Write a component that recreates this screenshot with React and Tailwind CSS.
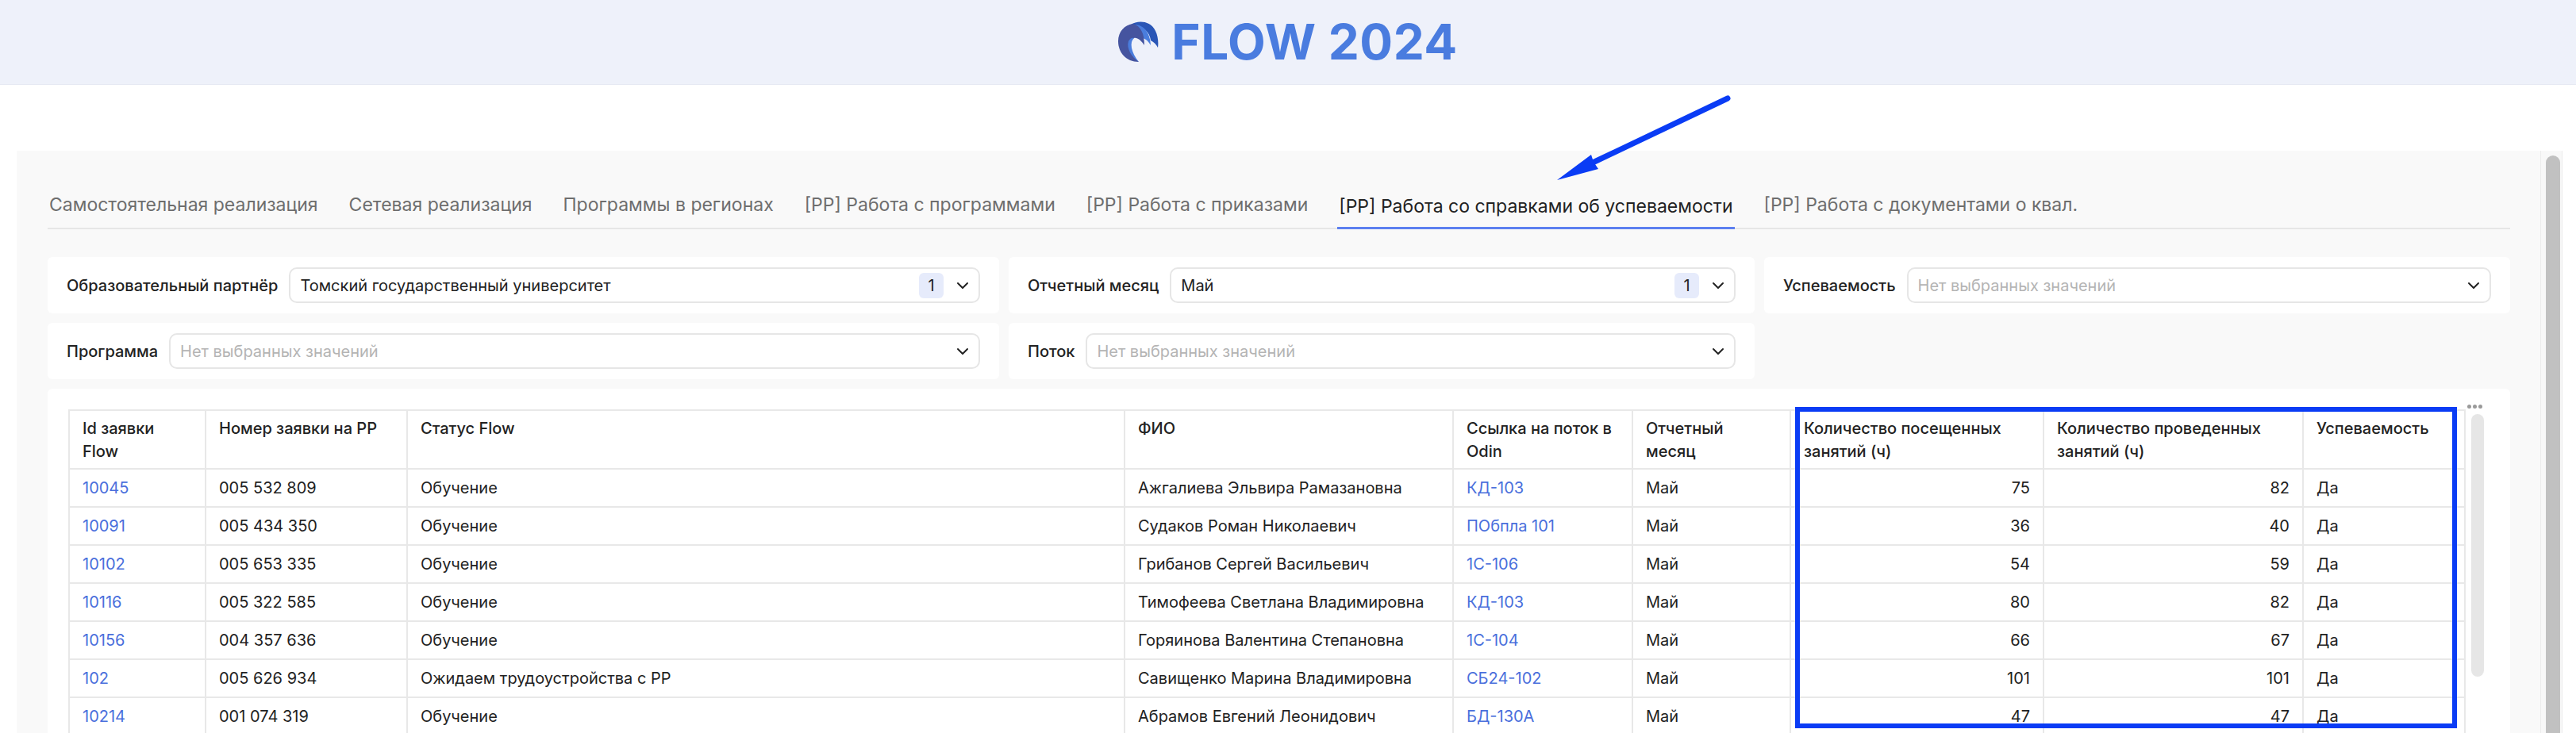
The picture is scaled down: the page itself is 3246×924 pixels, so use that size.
import React from "react";
import { ChevronDown } from "lucide-react";

const tabs = [
  "Самостоятельная реализация",
  "Сетевая реализация",
  "Программы в регионах",
  "[РР] Работа с программами",
  "[РР] Работа с приказами",
  "[РР] Работа со справками об успеваемости",
  "[РР] Работа с документами о квал.",
];

const columns = [
  { title: "Id заявки Flow", width: "w-[172px]" },
  { title: "Номер заявки на РР", width: "w-[254px]" },
  { title: "Статус Flow", width: "w-[904px]" },
  { title: "ФИО", width: "w-[414px]" },
  { title: "Ссылка на поток в Odin", width: "w-[226px]" },
  { title: "Отчетный месяц", width: "w-[199px]" },
  { title: "Количество посещенных занятий (ч)", width: "w-[319px]" },
  { title: "Количество проведенных занятий (ч)", width: "w-[327px]" },
  { title: "Успеваемость", width: "w-[204px]" },
];

const rows = [
  ["10045", "005 532 809", "Обучение", "Ажгалиева Эльвира Рамазановна", "КД-103", "75", "82"],
  ["10091", "005 434 350", "Обучение", "Судаков Роман Николаевич", "ПОбпла 101", "36", "40"],
  ["10102", "005 653 335", "Обучение", "Грибанов Сергей Васильевич", "1С-106", "54", "59"],
  ["10116", "005 322 585", "Обучение", "Тимофеева Светлана Владимировна", "КД-103", "80", "82"],
  ["10156", "004 357 636", "Обучение", "Горяинова Валентина Степановна", "1С-104", "66", "67"],
  ["102", "005 626 934", "Ожидаем трудоустройства с РР", "Савищенко Марина Владимировна", "СБ24-102", "101", "101"],
  ["10214", "001 074 319", "Обучение", "Абрамов Евгений Леонидович", "БД-130А", "47", "47"],
];

const Logo = () => (
  <svg viewBox="0 0 51 52" className="w-[51px] h-[52px] mr-[16px] mt-[-1px] shrink-0">
    <path d="M16 4C24 -1 40 -2 47 12C50 18 51 26 50 33C48 29 45 26 41 24C40 14 32 5 16 4Z" fill="#2a56b6" />
    <path d="M14 5C26 1 40 8 41 30C38 25 35 22 31 21C30 12 25 6 14 5Z" fill="#4a7ddd" />
    <path d="M26 51C10 51 0 39 0 25C0 13 8 4 19 3C29 6 33 16 33 30C29 24 24 20 20 21C13 23 14 40 26 51Z" fill="#45549f" />
    <path d="M26 51C17 45 10 34 13 25C15 21 18 20 20 21C14 26 16 39 26 51Z" fill="#4a7ddd" />
  </svg>
);

const FilterCard = ({ label, value, count }) => (
  <div className="flex items-center h-[71px] bg-white rounded-md pl-[24px] pr-[24px]">
    <span className="text-[20px] font-medium text-[#222] whitespace-nowrap mr-[14px]">{label}</span>
    <div className="flex flex-1 items-center h-[45px] border-2 border-[#e6e6e6] rounded-[10px] bg-white pl-[12px] pr-[8px]">
      <span className={value ? "text-[20px] text-[#222]" : "text-[20px] text-[#b4b4b4]"}>
        {value || "Нет выбранных значений"}
      </span>
      <span className="flex-1" />
      {count && (
        <span className="flex items-center justify-center w-[31px] h-[32px] rounded-md bg-[#e6ebfb] text-[20px] text-[#222]">
          {count}
        </span>
      )}
      <ChevronDown size={24} strokeWidth={2} className="text-[#222] ml-[12px]" />
    </div>
  </div>
);

export default function App() {
  return (
    <div className="relative h-[924px] overflow-hidden bg-white font-['Inter',sans-serif]">
      <header className="flex items-center justify-center h-[107px] bg-[#eef1fa] border-b border-[#e6e9f3]">
        <Logo />
        <h1 className="text-[62px] font-bold leading-none text-[#4a7cdf] tracking-[0.5px]">FLOW 2024</h1>
      </header>

      <div className="flex mt-[83px] ml-[21px] mr-[17px]">
        <main className="flex-1 bg-[#f9f9f9] pl-[39px] pr-[38px] h-[734px]">
          <nav className="flex gap-[35px] h-[99px] items-end border-b-2 border-[#e6e6e6]">
            {tabs.map((tab, i) => (
              <div
                key={tab}
                className={
                  i === 5
                    ? "text-[23px] h-[46px] px-[2px] mb-[-2px] text-[#222] border-b-[3px] border-[#5c7ff0] whitespace-nowrap"
                    : "text-[23px] h-[46px] px-[2px] text-[#6e6e6e] whitespace-nowrap"
                }
              >
                {tab}
              </div>
            ))}
          </nav>

          <div className="grid grid-cols-[1199px_940px_940px] gap-[12px] mt-[35px]">
            <FilterCard label="Образовательный партнёр" value="Томский государственный университет" count="1" />
            <FilterCard label="Отчетный месяц" value="Май" count="1" />
            <FilterCard label="Успеваемость" />
            <FilterCard label="Программа" />
            <FilterCard label="Поток" />
          </div>

          <div className="relative mt-[12px] bg-white rounded-md h-[444px] pl-[26px] pt-[26px]">
            <table className="table-fixed border-collapse w-[3019px] text-[20px] text-[#222]">
              <colgroup>
                {columns.map((col) => (
                  <col key={col.title} className={col.width} />
                ))}
              </colgroup>
              <thead>
                <tr className="h-[74px]">
                  {columns.map((col) => (
                    <th
                      key={col.title}
                      className="border-2 border-[#e8e8e8] align-top text-left font-medium leading-[29px] px-[16px] pt-[8px]"
                    >
                      {col.title}
                    </th>
                  ))}
                </tr>
              </thead>
              <tbody>
                {rows.map((row) => (
                  <tr key={row[0]} className="h-[48px]">
                    <td className="border-2 border-[#e8e8e8] px-[16px] text-[#4a6fdc]">{row[0]}</td>
                    <td className="border-2 border-[#e8e8e8] px-[16px]">{row[1]}</td>
                    <td className="border-2 border-[#e8e8e8] px-[16px]">{row[2]}</td>
                    <td className="border-2 border-[#e8e8e8] px-[16px]">{row[3]}</td>
                    <td className="border-2 border-[#e8e8e8] px-[16px] text-[#4a6fdc]">{row[4]}</td>
                    <td className="border-2 border-[#e8e8e8] px-[16px]">Май</td>
                    <td className="border-2 border-[#e8e8e8] px-[16px] text-right">{row[5]}</td>
                    <td className="border-2 border-[#e8e8e8] px-[16px] text-right">{row[6]}</td>
                    <td className="border-2 border-[#e8e8e8] px-[16px]">Да</td>
                  </tr>
                ))}
              </tbody>
            </table>

            {/* table scrollbar and its menu dots */}
            <div className="absolute left-[3049px] top-[20px] flex gap-[2px]">
              <span className="w-[5px] h-[5px] rounded-full bg-[#9a9a9a]" />
              <span className="w-[5px] h-[5px] rounded-full bg-[#9a9a9a]" />
              <span className="w-[5px] h-[5px] rounded-full bg-[#9a9a9a]" />
            </div>
            <div className="absolute left-[3054px] top-[32px] w-[16px] h-[331px] rounded-full bg-[#e6e6e6]" />
          </div>
        </main>

        <div className="w-[28px] bg-[#f8f8f8] border-l border-r border-[#ececec] pl-[6px] pt-[6px]">
          <div className="w-[18px] h-[760px] rounded-full bg-[#c1c1c1]" />
        </div>
      </div>

      {/* annotation drawn over the page */}
      <svg className="absolute left-0 top-0 w-[3246px] h-[924px] pointer-events-none" viewBox="0 0 3246 924">
        <path d="M2177 124L2009 204" stroke="#0a3cf5" strokeWidth="7" strokeLinecap="round" fill="none" />
        <path d="M1962 227L2005 195L2008 204L2014 213Z" fill="#0a3cf5" />
      </svg>
      <div className="absolute left-[2262px] top-[513px] w-[834px] h-[405px] border-[6px] border-[#0a3cf5] pointer-events-none" />
    </div>
  );
}
